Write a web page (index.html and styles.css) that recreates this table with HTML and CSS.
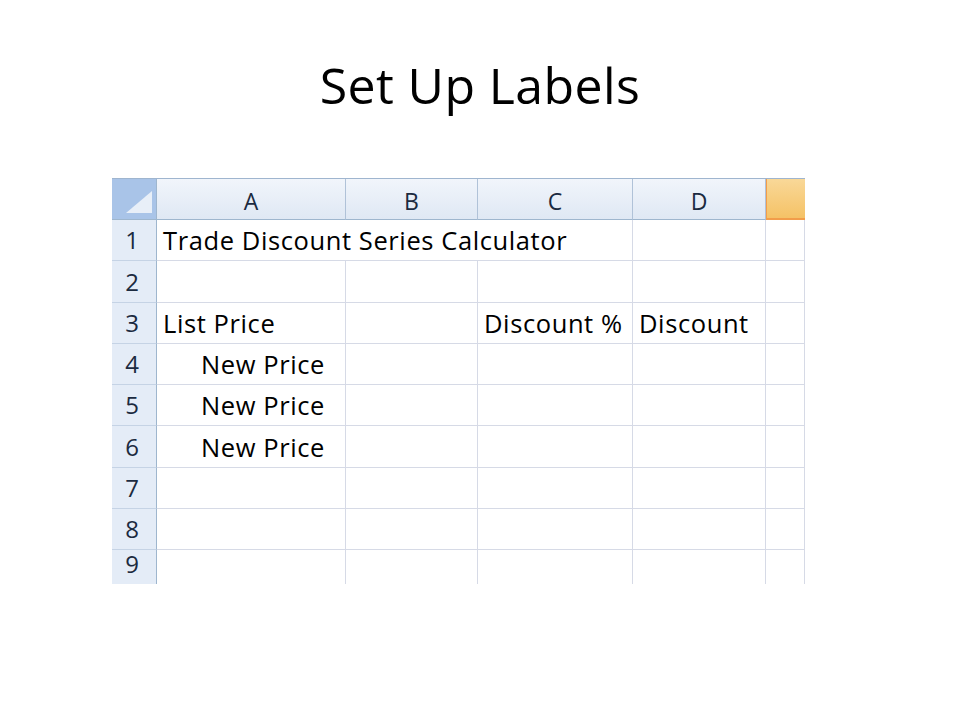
FILE: index.html
```html
<!DOCTYPE html>
<html>
<head>
<meta charset="utf-8">
<link rel="stylesheet" href="styles.css">
</head>
<body>
<h1 class="title">Set Up Labels</h1>
<div class="sheet">
  <div class="corner"><span class="tri"></span></div>
  <div class="colhead">A</div>
  <div class="colhead">B</div>
  <div class="colhead">C</div>
  <div class="colhead">D</div>
  <div class="colhead sel"></div>

  <div class="rowhead">1</div>
  <div class="cell span3">Trade Discount Series Calculator</div>
  <div class="cell"></div>
  <div class="cell"></div>

  <div class="rowhead">2</div>
  <div class="cell"></div><div class="cell"></div><div class="cell"></div><div class="cell"></div><div class="cell"></div>

  <div class="rowhead">3</div>
  <div class="cell">List Price</div>
  <div class="cell"></div>
  <div class="cell">Discount %</div>
  <div class="cell">Discount</div>
  <div class="cell"></div>

  <div class="rowhead">4</div>
  <div class="cell indent">New Price</div>
  <div class="cell"></div><div class="cell"></div><div class="cell"></div><div class="cell"></div>

  <div class="rowhead">5</div>
  <div class="cell indent">New Price</div>
  <div class="cell"></div><div class="cell"></div><div class="cell"></div><div class="cell"></div>

  <div class="rowhead">6</div>
  <div class="cell indent">New Price</div>
  <div class="cell"></div><div class="cell"></div><div class="cell"></div><div class="cell"></div>

  <div class="rowhead">7</div>
  <div class="cell"></div><div class="cell"></div><div class="cell"></div><div class="cell"></div><div class="cell"></div>

  <div class="rowhead">8</div>
  <div class="cell"></div><div class="cell"></div><div class="cell"></div><div class="cell"></div><div class="cell"></div>

  <div class="rowhead">9</div>
  <div class="cell"></div><div class="cell"></div><div class="cell"></div><div class="cell"></div><div class="cell"></div>
</div>
</body>
</html>
```
FILE: styles.css
```css
html, body {
  margin: 0;
  padding: 0;
  background: #ffffff;
}

body {
  width: 960px;
  height: 720px;
  overflow: hidden;
  font-family: "Open Sans", "Noto Sans", sans-serif;
  color: #000;
}

.title {
  margin: 0;
  box-sizing: border-box;
  height: 178px;
  padding-top: 51px;
  font-size: 50px;
  line-height: 68px;
  letter-spacing: 0.4px;
  font-weight: 400;
  text-align: center;
  color: #000;
}

.sheet {
  margin-left: 112px;
  width: 693px;
  height: 406px;
  overflow: hidden;
  display: grid;
  grid-template-columns: 45px 189px 132px 155px 133px 39px;
  grid-template-rows: 41px repeat(8, 41.25px) 35px;
  border-top: 1px solid #9fb5cf;
  box-sizing: border-box;
}

.corner {
  position: relative;
  background: #a9c4e8;
  border-right: 1px solid #9eb6ce;
  border-bottom: 1px solid #9eb6ce;
}

.tri {
  position: absolute;
  right: 4px;
  bottom: 6px;
  width: 0;
  height: 0;
  border-left: 26px solid transparent;
  border-bottom: 22px solid #e8eff8;
}

.colhead {
  display: flex;
  align-items: center;
  justify-content: center;
  padding-top: 3px;
  font-size: 23px;
  color: #1b2a40;
  background: linear-gradient(#f1f5fb, #dfe8f4);
  border-right: 1px solid #b0c2d8;
  border-bottom: 1px solid #9eb6ce;
}

.colhead.sel {
  background: linear-gradient(#f9d898, #f5c266);
  border-right: none;
  border-left: 1px solid #f29d4a;
  border-bottom: 2px solid #f29d4a;
}

.rowhead {
  display: flex;
  align-items: flex-end;
  justify-content: center;
  padding-bottom: 6px;
  padding-right: 4px;
  font-size: 24px;
  line-height: 28px;
  color: #1b2a40;
  background: #e4ecf7;
  border-right: 1px solid #9eb6ce;
  border-bottom: 1px solid #c5d3e5;
}

.cell {
  display: flex;
  align-items: flex-end;
  padding: 0 0 6px 6px;
  font-size: 25.5px;
  line-height: 28px;
  letter-spacing: 0.6px;
  white-space: nowrap;
  color: #000;
  border-right: 1px solid #d6dae6;
  border-bottom: 1px solid #d6dae6;
}

.cell.span3 {
  grid-column: span 3;
}

.cell.indent {
  padding-left: 44px;
}
```
